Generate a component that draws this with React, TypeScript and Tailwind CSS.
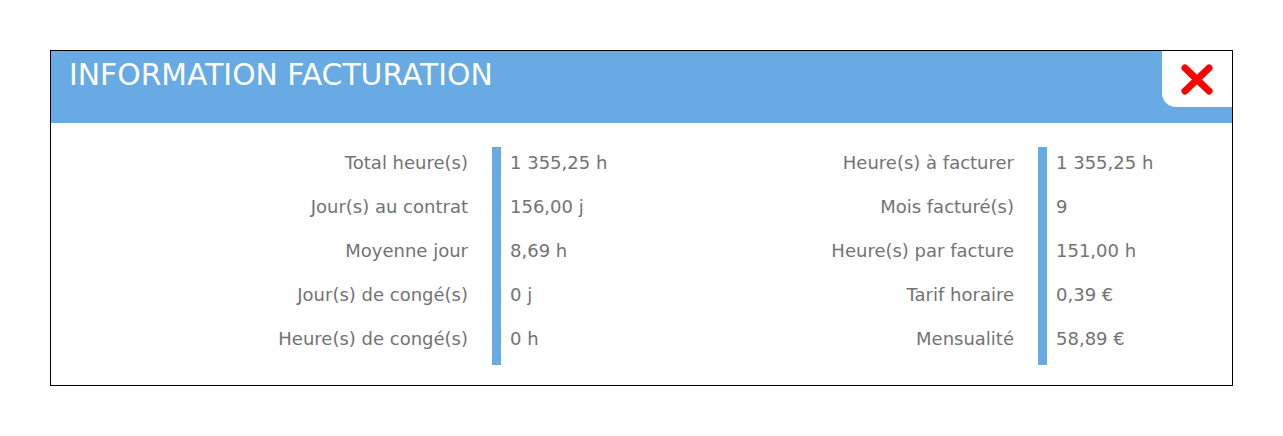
import React from 'react';

const left: [string, string][] = [
  ['Total heure(s)', '1 355,25 h'],
  ['Jour(s) au contrat', '156,00 j'],
  ['Moyenne jour', '8,69 h'],
  ['Jour(s) de congé(s)', '0 j'],
  ['Heure(s) de congé(s)', '0 h'],
];

const right: [string, string][] = [
  ['Heure(s) à facturer', '1 355,25 h'],
  ['Mois facturé(s)', '9'],
  ['Heure(s) par facture', '151,00 h'],
  ['Tarif horaire', '0,39 €'],
  ['Mensualité', '58,89 €'],
];

const InfoColumn: React.FC<{ rows: [string, string][] }> = ({ rows }) => (
  <div className="flex w-[546px] shrink-0">
    <div className="w-[417px] shrink-0 text-right whitespace-nowrap">
      {rows.map(([label]) => (
        <div key={label} className="h-[44px] leading-[44px]">{label}</div>
      ))}
    </div>
    <div className="ml-[24px] mt-[6px] h-[218px] w-[9px] shrink-0 bg-[#68aae3]" />
    <div className="flex-1 pl-[9px] whitespace-nowrap">
      {rows.map(([label, value]) => (
        <div key={label} className="h-[44px] leading-[44px]">{value}</div>
      ))}
    </div>
  </div>
);

export default function App() {
  return (
    <div className="min-h-[436px] bg-white pl-[50px] pt-[50px]" style={{ fontFamily: '"DejaVu Sans", sans-serif' }}>
      <div className="w-[1183px] h-[336px] border border-black bg-white">
        {/* Header */}
        <div className="relative h-[72px] bg-[#68aae3] pl-[18px] pt-[9px]">
          <h1 className="text-[29.8px] leading-none font-normal text-white whitespace-nowrap">INFORMATION FACTURATION</h1>
          <button className="absolute top-0 right-0 w-[70px] h-[56px] bg-white rounded-bl-[14px] flex items-center justify-center">
            <svg width="32" height="31" viewBox="0 0 32 31">
              <path d="M4 4 L28 27 M28 4 L4 27" stroke="#ff0000" strokeWidth="7" strokeLinecap="round" fill="none" />
            </svg>
          </button>
        </div>

        {/* Body */}
        <div className="flex pt-[18px] text-[18px] text-[#737373]">
          <InfoColumn rows={left} />
          <InfoColumn rows={right} />
        </div>
      </div>
    </div>
  );
}
